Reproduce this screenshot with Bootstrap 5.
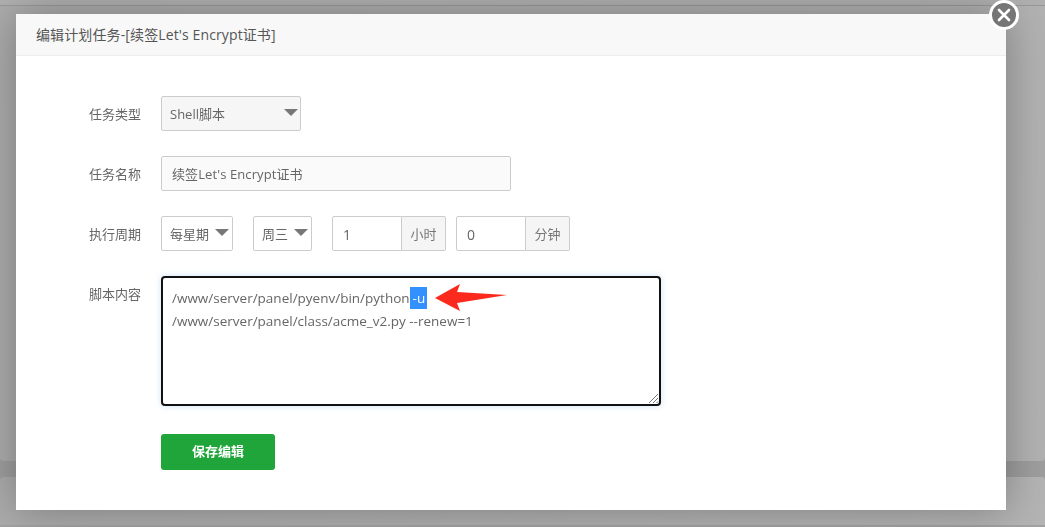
<!DOCTYPE html>
<html lang="zh-CN">
<head>
<meta charset="utf-8">
<title>编辑计划任务</title>
<link rel="stylesheet" href="https://cdn.jsdelivr.net/npm/bootstrap@5.3.0/dist/css/bootstrap.min.css">
<style>
html,body{height:527px;overflow:hidden}
body{font-family:"Open Sans","Noto Sans CJK SC",sans-serif;font-size:13px;color:#666;background:#a0a0a0}
.bg-top{height:6px;background:#b0b0b0;border-bottom:1px solid #989898}
.bg-panel{height:455px;background:linear-gradient(100deg,#acacac,#b2b2b2);border-radius:0 0 4px 4px}
.bg-band{height:16px;background:#9e9e9e}
.bg-foot{height:48px;background:linear-gradient(100deg,#acacac,#b4b4b4);border-radius:4px 4px 0 0}
.bg-end{height:2px;background:#a2a2a2}
.dlg-wrap{position:fixed;left:16px;top:14px;width:990px;height:496px}
.dlg{height:100%;border:0;border-radius:0;background:#fff;box-shadow:0 0 40px rgba(0,0,0,.3)}
.dlg-head{height:42px;padding:0 20px;background:#f8f8f8;border-bottom:1px solid #eee;font-size:14px;color:#555;border-radius:0;align-items:center;letter-spacing:.12px}
.dlg-body{padding:40px 0 0 73px}
.dlg-row{margin-bottom:25px;height:35px}
.dlg-row.tall{height:130px;margin-bottom:28px}
.dlg-label{width:52px;margin-right:20px;line-height:37px;font-size:13px;color:#666;text-align:right;white-space:nowrap;flex:none}
.fld{height:35px;border:1px solid #ccc;border-radius:2px;background:#fff;font-size:13px;color:#666;display:flex;align-items:center;padding:2px 8px 0;white-space:nowrap}
.sel{justify-content:space-between}
.sel::after{content:"";width:0;height:0;border-left:7px solid transparent;border-right:7px solid transparent;border-top:7px solid #777;margin:-4px 0 0 3px}
.sel-type{width:140px;background:#f6f6f6;padding-right:2px}
.sel-week{width:72px;margin-right:20px;padding-right:3px}
.sel-day{width:59px;margin-right:20px;padding-right:3px}
.inp-name{width:350px;background:#fafafa;padding-left:10px;letter-spacing:.1px}
.unit-num{width:70px;border-radius:2px 0 0 2px;padding-left:10px;font-size:14px}
.unit-tag{width:44px;border:1px solid #ccc;border-left:0;background:#f5f5f5;border-radius:0 2px 2px 0;height:35px;display:flex;align-items:center;justify-content:center;font-size:13px;color:#777;margin-right:10px;padding-top:2px;white-space:nowrap}
.code{position:relative;width:500px;height:130px;border:2px solid #111;border-radius:4px;padding:9px 9px;background:#fff;font-size:13.5px;line-height:23px;color:#666;box-shadow:0 0 6px rgba(102,175,233,.35)}
.code-sel{background:#3390ff;color:#fff;display:inline-block;line-height:22px;height:22px;vertical-align:top;padding-left:3px;width:17px}
.arrow{position:absolute;left:272px;top:5px}
.grip{position:absolute;right:0;bottom:0}
.save{width:114px;height:36px;background:#20a53a;border:0;border-radius:3px;color:#fff;font-size:13px;padding:0;font-weight:600}
.close-x{position:absolute;left:973px;top:-14px;width:30px;height:30px;border-radius:50%;background:#767676;border:3px solid #fff;display:flex;align-items:center;justify-content:center}
</style>
</head>
<body>
<div class="bg-top"></div>
<div class="bg-panel"></div>
<div class="bg-band"></div>
<div class="bg-foot"></div>
<div class="bg-end"></div>

<div class="dlg-wrap">
  <div class="modal-content dlg">
    <div class="modal-header dlg-head">编辑计划任务-[续签Let's Encrypt证书]</div>
    <div class="modal-body dlg-body">
      <div class="d-flex dlg-row">
        <div class="dlg-label">任务类型</div>
        <div class="fld sel sel-type">Shell脚本</div>
      </div>
      <div class="d-flex dlg-row">
        <div class="dlg-label">任务名称</div>
        <div class="fld inp-name">续签Let's Encrypt证书</div>
      </div>
      <div class="d-flex dlg-row">
        <div class="dlg-label">执行周期</div>
        <div class="fld sel sel-week">每星期</div>
        <div class="fld sel sel-day">周三</div>
        <div class="fld unit-num">1</div><div class="unit-tag">小时</div>
        <div class="fld unit-num">0</div><div class="unit-tag">分钟</div>
      </div>
      <div class="d-flex dlg-row tall">
        <div class="dlg-label">脚本内容</div>
        <div class="code">/www/server/panel/pyenv/bin/python<span class="code-sel">-u</span><br>/www/server/panel/class/acme_v2.py --renew=1
          <svg class="arrow" width="72" height="30" viewBox="0 0 72 30"><path d="M0 15 L25 1 L22 9 L72 12 L22 20 L25 28 Z" fill="#fb2a1c"/></svg>
          <svg class="grip" width="11" height="11" viewBox="0 0 11 11"><path d="M1 10 L10 1 M5 10 L10 5 M8.500 10 L10 8.500" stroke="#777" stroke-width="1"/></svg>
        </div>
      </div>
      <div class="d-flex">
        <div class="dlg-label"></div>
        <button type="button" class="btn save">保存编辑</button>
      </div>
    </div>
  </div>
  <div class="close-x">
    <svg width="14" height="14" viewBox="0 0 14 14"><path d="M2 2 L12 12 M12 2 L2 12" stroke="#fff" stroke-width="2.600" stroke-linecap="round"/></svg>
  </div>
</div>
<script src="https://cdn.jsdelivr.net/npm/bootstrap@5.3.0/dist/js/bootstrap.bundle.min.js"></script>
</body>
</html>
